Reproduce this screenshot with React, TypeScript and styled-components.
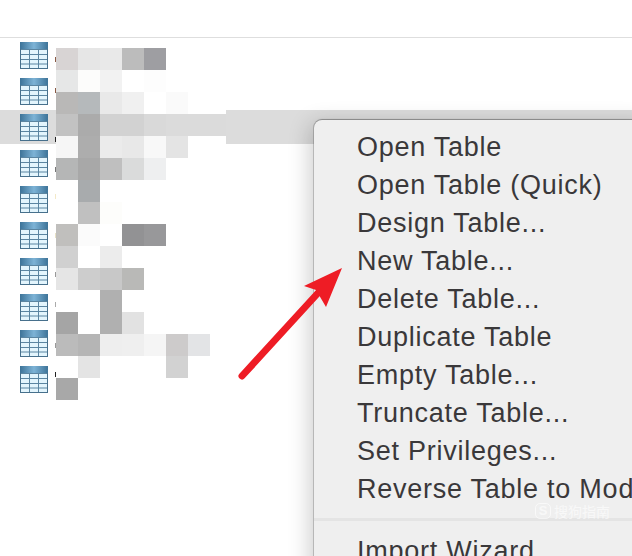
import React, { FC } from 'react'
import styled, { createGlobalStyle } from 'styled-components'

const GlobalStyle = createGlobalStyle`
  html, body {
    margin: 0;
    padding: 0;
    background: #fff;
  }
`

// styles
const Page = styled('div')`
  position: relative;
  width: 632px;
  height: 556px;
  overflow: hidden;
  background: #fff;
  font-family: 'Liberation Sans', Arial, sans-serif;
`
const TopBar = styled('div')`
  height: 37px;
  border-bottom: 1px solid #dedede;
`
const TableList = styled('ul')`
  display: flex;
  flex-direction: column;
  gap: 2px;
  margin: 0;
  padding: 0;
  list-style: none;
`
const TableRow = styled('li')<{ $selected?: boolean }>`
  display: flex;
  align-items: flex-start;
  height: 34px;
  padding: 4px 0 0 20px;
  box-sizing: border-box;
  background: ${(p) => (p.$selected ? '#dcdcdc' : 'transparent')};
`
const Speck = styled('span')<{ $tone: string; $top: number }>`
  width: 1px;
  height: 5px;
  margin: ${(p) => p.$top}px 0 0 7px;
  background: ${(p) => p.$tone};
`
const Mosaic = styled('div')`
  position: absolute;
  left: 56px;
  top: 48px;
  display: grid;
  grid-template-columns: repeat(7, 22px) 16px;
  grid-auto-rows: 22px;
`
const MosaicCell = styled('div')<{ $tone: string }>`
  background: ${(p) => p.$tone};
`
const ContextMenu = styled('div')`
  position: absolute;
  left: 314px;
  top: 120px;
  width: 340px;
  height: 460px;
  padding-top: 7px;
  box-sizing: border-box;
  background: #efefef;
  border-radius: 8px;
  box-shadow: 0 0 0 1px rgba(0, 0, 0, 0.16), 0 -1px 1px rgba(0, 0, 0, 0.2), -4px 3px 22px rgba(0, 0, 0, 0.2);
`
const MenuItem = styled('div')`
  height: 38px;
  padding-left: 43px;
  font-size: 27px;
  letter-spacing: 0.75px;
  line-height: 40px;
  white-space: nowrap;
  color: #3a383a;
`
const MenuSeparator = styled('div')`
  height: 3px;
  margin: 11px 0 10px;
  background: #e4e4e4;
`
const Watermark = styled('div')`
  position: absolute;
  left: 535px;
  top: 503px;
  display: flex;
  align-items: center;
  gap: 3px;
  font-family: 'Noto Sans CJK SC', sans-serif;
  font-size: 14px;
  line-height: 16px;
  white-space: nowrap;
  color: rgba(255, 255, 255, 0.6);
`
const WatermarkBadge = styled('span')`
  width: 14px;
  height: 14px;
  border: 1px solid rgba(255, 255, 255, 0.6);
  border-radius: 5px;
  font-family: 'Liberation Sans', Arial, sans-serif;
  font-size: 13px;
  font-weight: bold;
  line-height: 14px;
  text-align: center;
`
const ArrowOverlay = styled('svg')`
  position: absolute;
  left: 230px;
  top: 260px;
`

const TableIcon: FC = () => (
  <svg width="28" height="27" viewBox="0 0 28 27">
    <defs>
      <linearGradient id="tableHead" x1="0" x2="1" y1="0" y2="0">
        <stop offset="0" stopColor="#3d7398" />
        <stop offset="0.5" stopColor="#7db3d6" />
        <stop offset="1" stopColor="#3d7398" />
      </linearGradient>
    </defs>
    <rect x="0.5" y="0.5" width="27" height="26" fill="#e3f5fd" stroke="#47708c" />
    <rect x="0" y="0" width="28" height="7" fill="url(#tableHead)" />
    <path
      d="M9.5 7v19M18.5 7v19M1 7.5h26M1 12.5h26M1 17.5h26M1 22h26"
      fill="none"
      stroke="#5b85a1"
    />
  </svg>
)

const Arrow: FC = () => (
  <ArrowOverlay width="120" height="125" viewBox="230 260 120 125">
    <line x1="242" y1="376" x2="318" y2="293" stroke="#ee1c25" strokeWidth="7" strokeLinecap="round" />
    <polygon points="342,268 304,286 316,290 326,307" fill="#ee1c25" />
  </ArrowOverlay>
)

const W = '#ffffff'
// pixelated names, one row per 22px band
const mosaicRows: string[][] = [
  ['#d8d4d4', '#e6e6e6', '#e9e9e9', '#bcbcbc', '#9e9ea2', W, W, W],
  ['#e6e7e7', '#fcfcfb', '#f2f2f2', W, '#fdfdfd', W, W, W],
  ['#b9b8b7', '#b5b9bb', '#e9e9e9', '#f0f0f0', W, '#fafafa', W, W],
  ['#c2c2c2', '#ababab', '#d2d2d2', '#d2d2d2', '#d9d9d9', '#dbdbdb', '#dbdbdb', '#dbdbdb'],
  ['#f6f6f6', '#adadad', '#ebebeb', '#e8e8e8', '#f8f8f8', '#e4e4e4', W, W],
  ['#b5b6b6', '#a8a8a8', '#bfbfbf', '#dadbdb', '#eeeff0', W, W, W],
  [W, '#a8abad', W, W, W, W, W, W],
  [W, '#c0c0c0', '#fdfdfb', W, W, W, W, W],
  ['#c0bfbd', '#fbfbfb', W, '#929294', '#98989a', W, W, W],
  ['#d0d0d0', W, '#ececec', W, W, W, W, W],
  ['#e5e5e5', '#cdcdcd', '#c8c8c8', '#b9b9b7', W, W, W, W],
  [W, W, '#b0b0b0', W, W, W, W, W],
  ['#a5a5a5', W, '#b0b0b0', '#e2e2e2', W, W, W, W],
  ['#bbbbbb', '#b5b5b5', '#eeeeee', '#efefef', '#f5f5f5', '#cdcbcb', '#e3e4e6', W],
  [W, '#e4e4e4', W, W, W, '#d2d2d2', W, W],
  ['#a8a8a8', W, W, W, W, W, W, W],
]

const tableSpecks = [
  { tone: '#8a5a45', top: 15 },
  { tone: '#8a5a45', top: 10 },
  { tone: '#222222', top: 23 },
  { tone: '#777777', top: 17 },
  { tone: '#f3e9c8', top: 8 },
  { tone: '#e8e2c8', top: 11 },
  { tone: '#999999', top: 14 },
  { tone: '#aaaaaa', top: 8 },
  { tone: '#999999', top: 13 },
  { tone: '#222222', top: 6 },
]

const menuItems = [
  'Open Table',
  'Open Table (Quick)',
  'Design Table...',
  'New Table...',
  'Delete Table...',
  'Duplicate Table',
  'Empty Table...',
  'Truncate Table...',
  'Set Privileges...',
  'Reverse Table to Model...',
]

const App: FC = () => (
  <Page>
    <GlobalStyle />
    <TopBar />
    <TableList>
      {tableSpecks.map((speck, i) => (
        <TableRow key={i} $selected={i === 2}>
          <TableIcon />
          <Speck $tone={speck.tone} $top={speck.top} />
        </TableRow>
      ))}
    </TableList>
    <Mosaic>
      {mosaicRows.flat().map((tone, i) => (
        <MosaicCell key={i} $tone={tone} />
      ))}
    </Mosaic>
    <ContextMenu>
      {menuItems.map((label) => (
        <MenuItem key={label}>{label}</MenuItem>
      ))}
      <MenuSeparator />
      <MenuItem>Import Wizard...</MenuItem>
    </ContextMenu>
    <Watermark>
      <WatermarkBadge>S</WatermarkBadge>
      搜狗指南
    </Watermark>
    <Arrow />
  </Page>
)

export default App
